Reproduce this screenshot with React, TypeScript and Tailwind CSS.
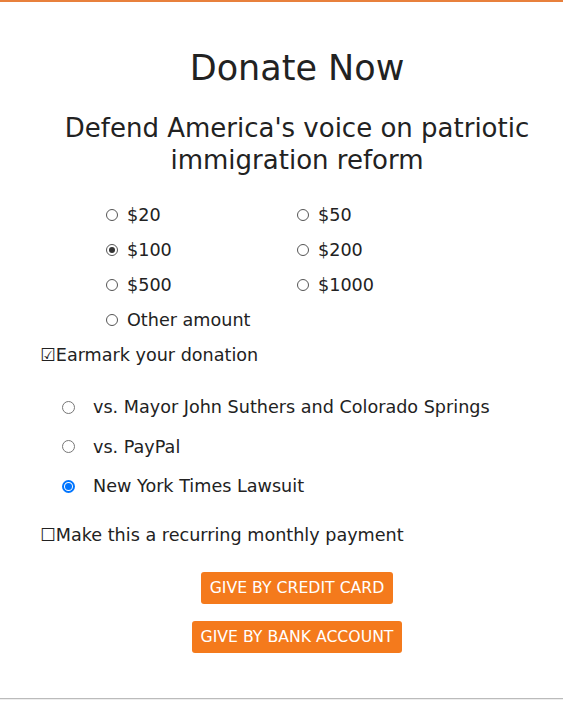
import { useState } from 'react';

const amounts = ['$20', '$50', '$100', '$200', '$500', '$1000', 'Other amount'];
const causes = ['vs. Mayor John Suthers and Colorado Springs', 'vs. PayPal', 'New York Times Lawsuit'];

function SmallRadio({ checked }: { checked: boolean }) {
  return (
    <span className="inline-flex h-[12px] w-[12px] items-center justify-center rounded-full border border-[#555] bg-white">
      {checked && <span className="h-[6px] w-[6px] rounded-full bg-[#333]" />}
    </span>
  );
}

function BlueRadio({ checked }: { checked: boolean }) {
  return checked ? (
    <span className="inline-flex h-[13px] w-[13px] items-center justify-center rounded-full border-2 border-[#0075ff] bg-white">
      <span className="h-[7px] w-[7px] rounded-full bg-[#0075ff]" />
    </span>
  ) : (
    <span className="inline-block h-[13px] w-[13px] rounded-full border border-[#767676] bg-white" />
  );
}

export default function App() {
  const [amount, setAmount] = useState('$100');
  const [cause, setCause] = useState(2);
  const [earmark, setEarmark] = useState(true);
  const [recurring, setRecurring] = useState(false);

  return (
    <div className="min-h-[712px] bg-white font-['DejaVu_Sans',Verdana,sans-serif] text-[#222]">
      <div className="h-[2px] bg-[#e8803c]" />
      <div className="pl-[40px] pr-[9px] pt-[45px]">
        <h1 className="text-center text-[35px] leading-[42px]">Donate Now</h1>
        <h2 className="mt-[23px] text-center text-[26px] leading-[32px]">
          Defend America's voice on patriotic
          <br />
          immigration reform
        </h2>

        {/* Amounts */}
        <div className="mt-[29px] ml-[66px] grid w-[382px] grid-cols-2 gap-y-[15px] text-[17.6px] leading-[20px]">
          {amounts.map((a) => (
            <label key={a} className="flex cursor-pointer items-center" onClick={() => setAmount(a)}>
              <SmallRadio checked={amount === a} />
              <span className="ml-[9px]">{a}</span>
            </label>
          ))}
        </div>

        <div
          className="mt-[15px] flex cursor-pointer items-center text-[17.6px] leading-[20px]"
          onClick={() => setEarmark(!earmark)}
        >
          <span>{earmark ? '☑' : '☐'}</span>
          <span>Earmark your donation</span>
        </div>

        {/* Causes */}
        <div className="mt-[32px] ml-[22px] flex flex-col gap-y-[19.5px] text-[17.6px] leading-[20px]">
          {causes.map((c, i) => (
            <label key={c} className="flex cursor-pointer items-center" onClick={() => setCause(i)}>
              <BlueRadio checked={cause === i} />
              <span className="ml-[18px]">{c}</span>
            </label>
          ))}
        </div>

        <div
          className="mt-[29px] flex cursor-pointer items-center text-[17.6px] leading-[20px]"
          onClick={() => setRecurring(!recurring)}
        >
          <span>{recurring ? '☑' : '☐'}</span>
          <span>Make this a recurring monthly payment</span>
        </div>

        <div className="mt-[27px] flex flex-col items-center gap-y-[17px]">
          <button className="rounded-[3px] bg-[#f47a1c] px-[9px] py-[6px] text-[15.7px] leading-[20px] text-white">
            GIVE BY CREDIT CARD
          </button>
          <button className="rounded-[3px] bg-[#f47a1c] px-[9px] py-[6px] text-[15.7px] leading-[20px] text-white">
            GIVE BY BANK ACCOUNT
          </button>
        </div>
      </div>
      <div className="mt-[45px] h-[1px] bg-[#bbb]" />
      <div className="h-[1px] bg-[#eee]" />
    </div>
  );
}
